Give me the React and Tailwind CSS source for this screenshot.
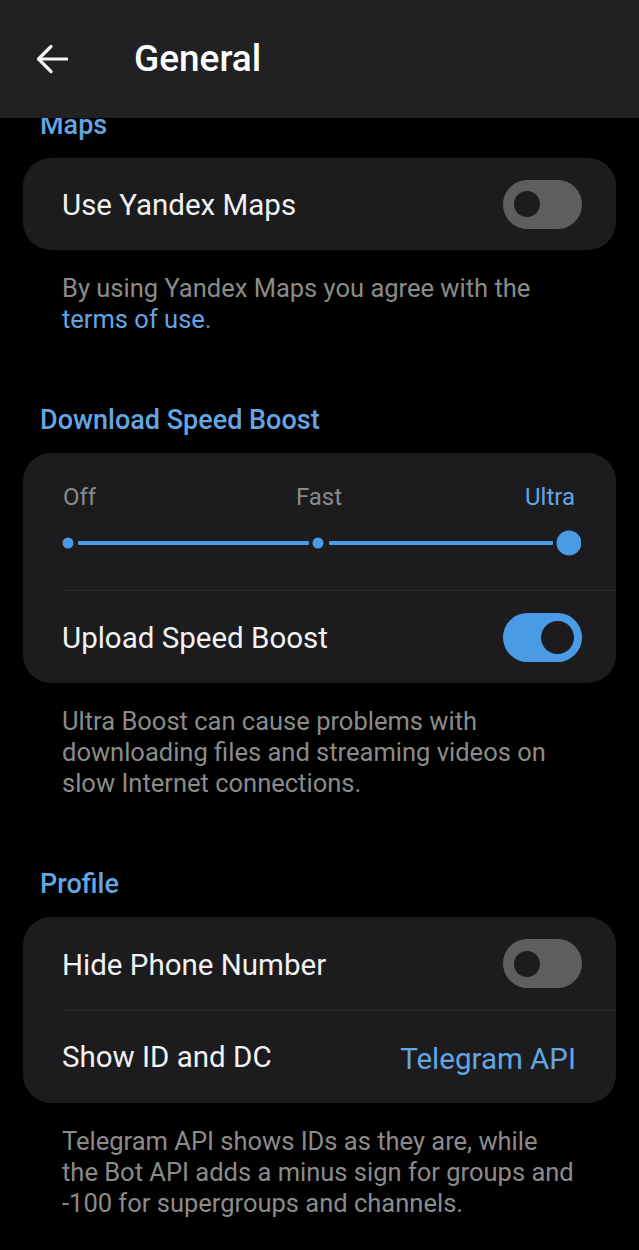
import React from "react";

function Toggle({ on }) {
  if (on) {
    return (
      <div className="w-[79px] h-[49px] rounded-full bg-[#4a9be6] flex items-center justify-end pr-[8px] shrink-0">
        <div className="w-[33px] h-[33px] rounded-full bg-[#1c1c1e]" />
      </div>
    );
  }
  return (
    <div className="w-[79px] h-[49px] rounded-full bg-[#5e5e5e] flex items-center pl-[11px] shrink-0">
      <div className="w-[26px] h-[26px] rounded-full bg-[#1c1c1e]" />
    </div>
  );
}

function SectionLabel({ children, className = "" }) {
  return (
    <div className={"pl-[17px] h-[32px] text-[27px] leading-[32px] font-medium text-[#64a5e4] " + className}>
      {children}
    </div>
  );
}

export default function App() {
  return (
    <div className="w-[639px] h-[1250px] bg-black overflow-hidden font-['Roboto','Noto_Sans',sans-serif] text-[#f2f2f2]">
      <div className="relative z-10 h-[118px] bg-[#212123] flex items-center">
        <svg className="ml-[36px]" width="32" height="30" viewBox="0 0 32 30" fill="none" stroke="#f5f5f5" strokeWidth="3.2" strokeLinecap="round" strokeLinejoin="round">
          <path d="M31 15H3" />
          <path d="M15 2.5L2.5 15L15 27.5" />
        </svg>
        <div className="ml-[66px] text-[37px] leading-[44px] font-medium text-white">General</div>
      </div>

      <div className="-mt-[9px] px-[23px]">
        <SectionLabel>Maps</SectionLabel>
        <div className="mt-[17px] h-[92px] rounded-[28px] bg-[#1c1c1e] flex items-center justify-between pl-[39px] pr-[34px]">
          <span className="text-[29.5px] leading-[34px] mt-[2px]">Use Yandex Maps</span>
          <Toggle on={false} />
        </div>
        <div className="mt-[23px] pl-[39px] text-[25.5px] leading-[31px] text-[#8b8b8b]">
          By using Yandex Maps you agree with the
          <br />
          <span className="text-[#64a5e4]">terms of use</span>.
        </div>

        <SectionLabel className="mt-[69px]">Download Speed Boost</SectionLabel>
        <div className="mt-[17px] rounded-[28px] bg-[#1c1c1e] flex flex-col">
          <div className="h-[137px] pl-[39px] pr-[35px] pt-[30px] flex flex-col">
            <div className="grid grid-cols-3 pl-[1px] pr-[6px] text-[24px] leading-[28px]">
              <span className="text-left text-[#8a8a8a]">Off</span>
              <span className="text-center text-[#8a8a8a]">Fast</span>
              <span className="text-right text-[#64a5e4]">Ultra</span>
            </div>
            <svg className="mt-[19px]" width="519" height="26" viewBox="0 0 519 26">
              <rect x="16" y="11" width="231" height="4" rx="1" fill="#4a9be6" />
              <rect x="267" y="11" width="224" height="4" rx="1" fill="#4a9be6" />
              <circle cx="6" cy="13" r="5.5" fill="#4a9be6" />
              <circle cx="256" cy="13" r="5.5" fill="#4a9be6" />
              <circle cx="507" cy="13" r="12.5" fill="#4a9be6" />
            </svg>
          </div>
          <div className="ml-[39px] h-px bg-[#2a2a2c]" />
          <div className="h-[92px] flex items-center justify-between pl-[39px] pr-[34px]">
            <span className="text-[29.5px] leading-[34px] mt-[2px]">Upload Speed Boost</span>
            <Toggle on={true} />
          </div>
        </div>
        <div className="mt-[23px] pl-[39px] text-[25.5px] leading-[31px] text-[#8b8b8b]">
          Ultra Boost can cause problems with
          <br />
          downloading files and streaming videos on
          <br />
          slow Internet connections.
        </div>

        <SectionLabel className="mt-[69px]">Profile</SectionLabel>
        <div className="mt-[17px] rounded-[28px] bg-[#1c1c1e] flex flex-col">
          <div className="h-[93px] flex items-center justify-between pl-[39px] pr-[34px]">
            <span className="text-[29.5px] leading-[34px] mt-[2px]">Hide Phone Number</span>
            <Toggle on={false} />
          </div>
          <div className="ml-[39px] h-px bg-[#2a2a2c]" />
          <div className="h-[92px] flex items-center justify-between pl-[39px] pr-[40px]">
            <span className="text-[29.5px] leading-[34px]">Show ID and DC</span>
            <span className="text-[29.5px] leading-[34px] mt-[4px] text-[#64a5e4]">Telegram API</span>
          </div>
        </div>
        <div className="mt-[23px] pl-[39px] text-[25.5px] leading-[31px] text-[#8b8b8b]">
          Telegram API shows IDs as they are, while
          <br />
          the Bot API adds a minus sign for groups and
          <br />
          -100 for supergroups and channels.
        </div>
      </div>
    </div>
  );
}
